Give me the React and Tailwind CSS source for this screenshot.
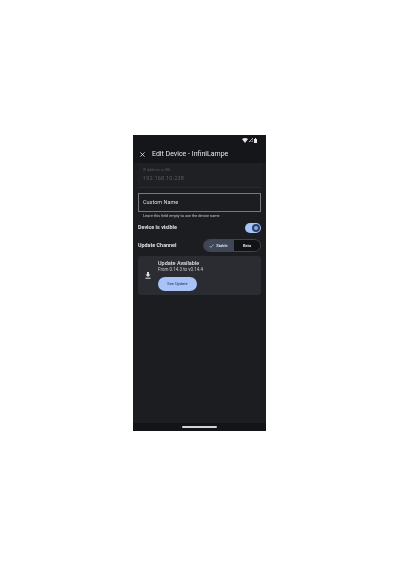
import React from "react";

export default function App() {
  return (
    <div className="min-h-[567px] bg-white pl-[133px] pt-[135px] font-['Roboto',sans-serif]">
      <div className="w-[133px] h-[296px] bg-[#1c1d20] flex flex-col overflow-hidden text-[#e3e3e6] blur-[0.3px]">
        <div className="h-[28px] shrink-0 bg-[#15161a] flex flex-col">
          <div className="h-[9px] flex items-center justify-end gap-[1px] pr-[9px] pt-[1px]">
            <svg width="6" height="5" viewBox="0 0 6 5"><path d="M0 1 Q3 -1 6 1 L3 5 Z" fill="#e8e8e8" /></svg>
            <svg width="4" height="4" viewBox="0 0 5 5"><path d="M5 0 V5 H0 Z" fill="none" stroke="#e8e8e8" strokeWidth="0.8" /></svg>
            <svg width="3" height="5" viewBox="0 0 3 5"><path d="M1 0 H2 V1 H3 V5 H0 V1 H1 Z" fill="#e8e8e8" /></svg>
          </div>
          <div className="flex-1 flex items-center pl-[7px] gap-[7px] pt-[2px]">
            <svg width="5" height="5" viewBox="0 0 6 6" stroke="#e8e8e8" strokeWidth="1"><path d="M0.5 0.5 L5.5 5.5 M5.5 0.5 L0.5 5.5" /></svg>
            <span className="text-[7px] leading-none whitespace-nowrap text-[#e6e6e9]">Edit Device - InfiniLampe</span>
          </div>
        </div>

        <div className="flex flex-col pl-[5px] pr-[5px]">
          <div className="h-[25px] bg-[#1f2023] border-b border-[#2a2b2f] px-[5px] pt-[5px] flex flex-col">
            <span className="text-[3.5px] leading-[5px] text-[#55565a]">IP Address or URL</span>
            <span className="text-[5.5px] leading-[8px] mt-[1px] text-[#5a5b60] tracking-[0.2px]">192.168.10.238</span>
          </div>
          <div className="h-[19px] mt-[5px] border border-[#77787c] flex items-center px-[4px]">
            <span className="text-[5.5px] leading-none text-[#dcdde0]">Custom Name</span>
          </div>
          <span className="text-[3.8px] leading-[6px] pl-[5px] mt-[1px] text-[#c8c9cd] whitespace-nowrap">Leave this field empty to use the device name</span>

          <div className="flex items-center justify-between mt-[4px] h-[10px]">
            <span className="text-[5.4px] font-bold text-[#e0e0e3] leading-none">Device is visible</span>
            <div className="w-[16px] h-[10px] rounded-full bg-[#a9c2f7] flex items-center justify-end pr-[1px]">
              <div className="w-[8px] h-[8px] rounded-full bg-[#2a3f6b] flex items-center justify-center">
                <div className="w-[4px] h-[4px] rounded-full bg-[#8fa8dc]" />
              </div>
            </div>
          </div>

          <div className="flex items-center justify-between mt-[6px] h-[13px]">
            <span className="text-[5.4px] font-bold text-[#e0e0e3] leading-none">Update Channel</span>
            <div className="w-[58px] h-[13px] rounded-full border border-[#44454a] flex overflow-hidden">
              <div className="w-[29px] bg-[#3f4656] flex items-center justify-center gap-[2px]">
                <svg width="5" height="4" viewBox="0 0 5 4" fill="none" stroke="#d6dcea" strokeWidth="0.6"><path d="M0.5 2 L1.9 3.4 L4.6 0.5" /></svg>
                <span className="text-[4px] font-bold leading-none text-[#d6dcea]">Stable</span>
              </div>
              <div className="flex-1 bg-[#111215] border-l border-[#44454a] flex items-center justify-center">
                <span className="text-[4px] font-bold leading-none text-[#e0e0e3]">Beta</span>
              </div>
            </div>
          </div>

          <div className="mt-[4px] h-[39px] bg-[#2b2c31] rounded-[3px] flex pl-[7px]">
            <svg width="6" height="7" viewBox="0 0 6 7" fill="#dedfe2" className="shrink-0 self-center">
              <path d="M2 0 H4 V2.4 H5.6 L3 5 L0.4 2.4 H2 Z" />
              <rect x="0.4" y="5.7" width="5.2" height="1" />
            </svg>
            <div className="ml-[7px] pt-[4px] flex flex-col items-start">
              <span className="text-[5.5px] font-medium leading-[7px] text-[#e2e2e5] whitespace-nowrap">Update Available</span>
              <span className="text-[4.5px] leading-[6px] text-[#c8c9cd] whitespace-nowrap">From 0.14.3 to v0.14.4</span>
              <div className="mt-[4px] w-[39px] h-[14px] rounded-full bg-[#a9c2f7] flex items-center justify-center">
                <span className="text-[4px] font-medium leading-none text-[#3a4f7b]">See Update</span>
              </div>
            </div>
          </div>
        </div>

        <div className="mt-auto h-[8px] bg-[#131417] flex justify-center items-start pt-[3px]">
          <div className="w-[35px] h-[2px] bg-[#d4d4d6] rounded-full" />
        </div>
      </div>
    </div>
  );
}
